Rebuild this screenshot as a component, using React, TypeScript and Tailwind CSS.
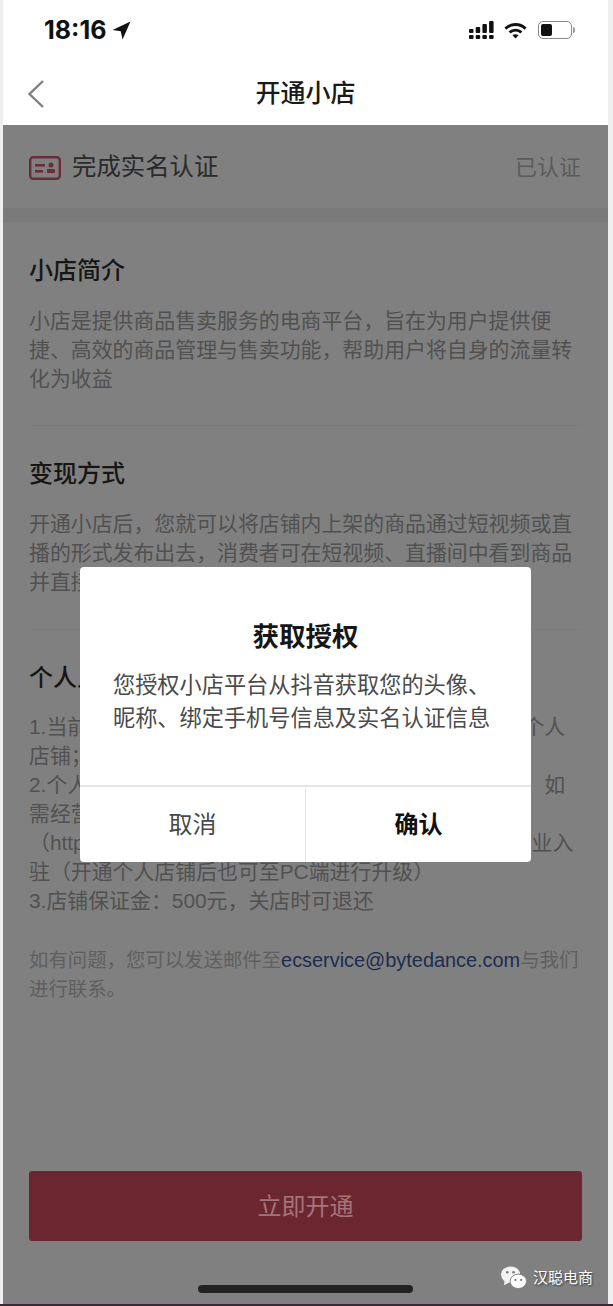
export default function App() {
  const font = { fontFamily: '"Liberation Sans","Noto Sans CJK SC",sans-serif' };
  return (
    <div style={font} className="relative flex h-[1306px] w-[613px] flex-col overflow-hidden bg-[#efefef]">
      <div className="flex min-h-0 flex-1 flex-col pl-[3px] pr-[5px]">
        <div className="flex h-[125px] shrink-0 flex-col bg-white">
          <div className="flex h-[59px] items-center pl-[41px] pr-[33px] pt-[1px]">
            <span className="font-['Inter'] text-[25px] font-bold leading-none text-[#111]">18:16</span>
            <svg viewBox="0 0 18 18" className="ml-[6px] h-[19px] w-[19px]" fill="#111">
              <path d="M17.500 0.500 0.500 8.500l7.800 1.200L10 17.500z" />
            </svg>
            <div className="ml-auto flex items-center">
              <svg viewBox="0 0 25 18" className="h-[18px] w-[25px]" fill="#111">
                <rect x="0" y="8" width="4.500" height="4" rx="1" />
                <rect x="0" y="14" width="4.500" height="4" rx="1" />
                <rect x="6.700" y="6" width="4.500" height="6" rx="1" />
                <rect x="6.700" y="14" width="4.500" height="4" rx="1" />
                <rect x="13.400" y="3" width="4.500" height="9" rx="1" />
                <rect x="13.400" y="14" width="4.500" height="4" rx="1" />
                <rect x="20.100" y="0" width="4.500" height="12" rx="1" />
                <rect x="20.100" y="14" width="4.500" height="4" rx="1" />
              </svg>
              <svg viewBox="0 0 24 17" className="ml-[10px] h-[17px] w-[23px]" fill="none" stroke="#111" strokeWidth="3">
                <path d="M1.500 6.500c6-5.600 15-5.600 21 0" />
                <path d="M5.800 10.500c3.600-3.200 8.800-3.200 12.400 0" />
                <path d="M12 16.800 8.800 13.500c1.900-1.500 4.500-1.500 6.400 0z" fill="#111" stroke="none" />
              </svg>
              <div className="ml-[11px] flex h-[18px] w-[34px] items-center rounded-[5px] border-[1.5px] border-[#8a8a8a] p-[2px]">
                <div className="h-full w-[11px] rounded-[2px] bg-[#111]" />
              </div>
              <div className="ml-[1px] h-[6px] w-[2px] rounded-r-full bg-[#999]" />
            </div>
          </div>
          <div className="relative flex flex-1 items-center justify-center pt-[3px]">
            <svg viewBox="0 0 20 30" className="absolute left-[23px] top-[20px] h-[30px] w-[20px]" fill="none" stroke="#7f7f7f" strokeWidth="2.400">
              <path d="M17 2 3.500 15 17 28" />
            </svg>
            <span className="text-[25px] font-medium leading-none text-[#1a1a1a]">开通小店</span>
          </div>
        </div>

        <div className="flex min-h-0 flex-1 flex-col bg-[#808080]">
          <div className="flex h-[83px] shrink-0 items-center px-[26px] pt-[2px]">
            <svg viewBox="0 0 32 24" className="h-[24px] w-[32px]" fill="none">
              <rect x="1.200" y="1.200" width="29.600" height="21.600" rx="3" stroke="#6d2c3a" strokeWidth="2.400" />
              <rect x="6" y="8" width="10" height="2.600" fill="#6d2c3a" />
              <rect x="6" y="14" width="8" height="2.600" fill="#6d2c3a" />
              <circle cx="22" cy="9" r="2.500" fill="#6d2c3a" />
              <rect x="18" y="13" width="8" height="4" rx="1" fill="#6d2c3a" />
            </svg>
            <span className="ml-[11px] text-[24.4px] leading-none text-[#2a2a2a]">完成实名认证</span>
            <span className="ml-auto pr-[1px] text-[22px] leading-none text-[#5c5c5c]">已认证</span>
          </div>
          <div className="h-[14px] shrink-0 bg-[#7a7a7a]" />

          <div className="flex flex-1 flex-col px-[26px] pb-[63px] text-[20.9px] leading-[29px] text-[#515151]">
            <h2 className="mt-[33px] text-[24px] font-medium leading-[32px] text-[#161616]">小店简介</h2>
            <p className="mt-[19px] whitespace-nowrap">
              小店是提供商品售卖服务的电商平台，旨在为用户提供便
              <br />
              捷、高效的商品管理与售卖功能，帮助用户将自身的流量转
              <br />
              化为收益
            </p>
            <div className="mt-[32px] h-px bg-[#7c7c7c]" />
            <h2 className="mt-[32px] text-[24px] font-medium leading-[32px] text-[#161616]">变现方式</h2>
            <p className="mt-[19px] whitespace-nowrap">
              开通小店后，您就可以将店铺内上架的商品通过短视频或直
              <br />
              播的形式发布出去，消费者可在短视频、直播间中看到商品
              <br />
              并直接下单购买，完成流量变现
            </p>
            <div className="mt-[33px] h-px bg-[#7c7c7c]" />
            <h2 className="mt-[32px] text-[24px] font-medium leading-[32px] text-[#161616]">个人入驻须知</h2>
            <p className="mt-[18px] whitespace-nowrap">
              1.当前仅支持绑定手机号并完成实名认证的用户开通&nbsp;&nbsp;&nbsp;个人
              <br />
              店铺；
              <br />
              2.个人店铺暂不支持经营部分特殊类目商品和品牌商品&nbsp;&nbsp;&nbsp;如
              <br />
              需经营相关类目请前往小店电脑端后台
              <br />
              （https://fxg.jinritemai.com/）进行操作或申请升级为企业入
              <br />
              驻（开通个人店铺后也可至PC端进行升级）
              <br />
              3.店铺保证金：500元，关店时可退还
            </p>
            <p className="mt-[31px] whitespace-nowrap text-[19.4px] text-[#5f5f5f]">
              如有问题，您可以发送邮件至<span className="text-[19.9px] text-[#1c2c52]">ecservice@bytedance.com</span>与我们
              <br />
              进行联系。
            </p>
            <button className="mt-auto flex h-[70px] w-full items-center justify-center rounded-[3px] bg-[#6b2630] text-[24px] text-[#a5747b]">
              立即开通
            </button>
          </div>
        </div>
      </div>
      <div className="h-[2px] shrink-0 bg-[#3a2a35]" />

      <div className="absolute left-[198px] top-[1285px] h-[8px] w-[215px] rounded-full bg-[#222]" />

      <div className="absolute right-[20px] top-[1265px] flex items-center gap-[6px]">
        <svg viewBox="0 0 28 26" className="h-[25px] w-[27px]">
          <ellipse cx="11" cy="10" rx="10" ry="8.500" fill="#f2f2f2" />
          <path d="M5 15 4 21l6-3z" fill="#f2f2f2" />
          <ellipse cx="19" cy="17" rx="8.500" ry="7.500" fill="#fff" stroke="#808080" strokeWidth="1" />
          <circle cx="7.500" cy="7.500" r="1.300" fill="#777" />
          <circle cx="14" cy="7.500" r="1.300" fill="#777" />
          <circle cx="16" cy="15.500" r="1.100" fill="#777" />
          <circle cx="22" cy="15.500" r="1.100" fill="#777" />
        </svg>
        <span className="text-[15px] leading-none text-white [text-shadow:1px_1px_2px_rgba(0,0,0,0.6)]">汉聪电商</span>
      </div>

      <div className="absolute left-[80px] top-[567px] flex h-[295px] w-[451px] flex-col rounded-[4px] bg-white">
        <div className="flex flex-1 flex-col px-[33px]">
          <h3 className="mt-[54px] text-center text-[26.5px] font-bold leading-[32px] text-[#161616]">获取授权</h3>
          <p className="mt-[16px] whitespace-nowrap text-[22.2px] leading-[33px] text-[#4a4a4a]">
            您授权小店平台从抖音获取您的头像、
            <br />
            昵称、绑定手机号信息及实名认证信息
          </p>
        </div>
        <div className="flex h-[77px] shrink-0 border-t-2 border-[#e6e6e6] text-[24px] leading-none">
          <button className="flex-1 border-r border-[#e6e6e6] text-[#4a4a4a]">取消</button>
          <button className="flex-1 font-bold text-[#111]">确认</button>
        </div>
      </div>
    </div>
  );
}
